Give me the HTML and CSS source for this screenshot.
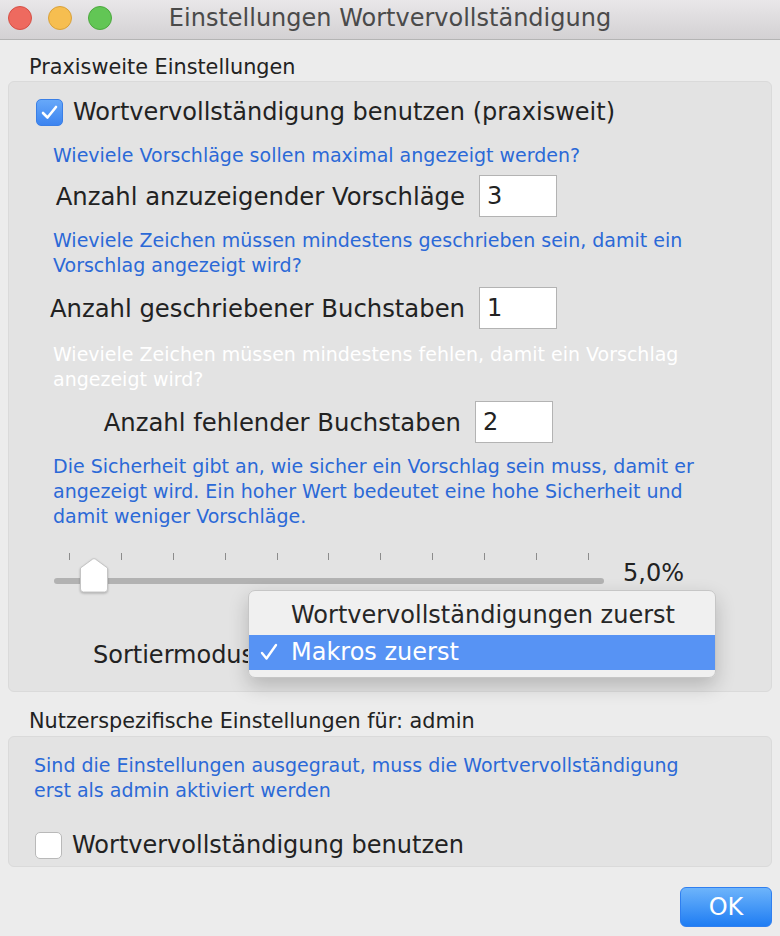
FILE: index.html
```html
<!DOCTYPE html>
<html lang="de">

<head>
    <meta charset="UTF-8">
    <meta name="viewport" content="width=device-width, initial-scale=1.0">
    <title>Einstellungen Wortvervollständigung</title>
    <link rel="stylesheet" href="styles.css">
</head>

<body>
    <div class="window">
        <div class="titlebar">
            <div class="lights">
                <span class="light red"></span>
                <span class="light yellow"></span>
                <span class="light green"></span>
            </div>
            <div class="title">Einstellungen Wortvervollständigung</div>
            <div></div>
        </div>

        <div class="content">
            <div class="section-label">Praxisweite Einstellungen</div>
            <div class="group group-main">
                <div class="check-row">
                    <span class="checkbox checked">
                        <svg width="17" height="15" viewBox="0 0 17 15"><path d="M2 8 L6.5 12.5 L15 2" fill="none" stroke="#fff" stroke-width="2.6" stroke-linecap="round" stroke-linejoin="round"/></svg>
                    </span>
                    <span>Wortvervollständigung benutzen (praxisweit)</span>
                </div>

                <p class="hint hint-first">Wieviele Vorschläge sollen maximal angezeigt werden?</p>
                <div class="field-row">
                    <span class="field-label">Anzahl anzuzeigender Vorschläge</span>
                    <span class="field-input">3</span>
                </div>

                <p class="hint">Wieviele Zeichen müssen mindestens geschrieben sein, damit ein<br>Vorschlag angezeigt wird?</p>
                <div class="field-row">
                    <span class="field-label">Anzahl geschriebener Buchstaben</span>
                    <span class="field-input">1</span>
                </div>

                <p class="hint hint-disabled">Wieviele Zeichen müssen mindestens fehlen, damit ein Vorschlag<br>angezeigt wird?</p>
                <div class="field-row field-row-short">
                    <span class="field-label">Anzahl fehlender Buchstaben</span>
                    <span class="field-input">2</span>
                </div>

                <p class="hint">Die Sicherheit gibt an, wie sicher ein Vorschlag sein muss, damit er<br>angezeigt wird. Ein hoher Wert bedeutet eine hohe Sicherheit und<br>damit weniger Vorschläge.</p>

                <div class="slider-row">
                    <div class="slider">
                        <div class="ticks">
                            <span></span><span></span><span></span><span></span><span></span><span></span>
                            <span></span><span></span><span></span><span></span><span></span>
                        </div>
                        <div class="track"></div>
                        <svg class="knob" width="32" height="37" viewBox="0 0 32 37">
                            <path d="M14.5 2.2 Q16 1 17.5 2.2 L29.5 11 L29.5 32 Q29.5 35 26.5 35 L5.5 35 Q2.5 35 2.5 32 L2.5 11 Z" fill="#fff" stroke="#c4c4c4" stroke-width="1"/>
                        </svg>
                    </div>
                    <span class="slider-value">5,0%</span>
                </div>

                <div class="sort-row">Sortiermodus</div>

                <div class="popup-menu">
                    <div class="menu-item">Wortvervollständigungen zuerst</div>
                    <div class="menu-item selected">
                        <svg class="tick" width="18" height="18" viewBox="0 0 18 18"><path d="M2 10 L6.5 15.5 L16 2" fill="none" stroke="#fff" stroke-width="2.4" stroke-linecap="round" stroke-linejoin="round"/></svg>
                        Makros zuerst
                    </div>
                </div>
            </div>

            <div class="section-label section-label-user">Nutzerspezifische Einstellungen für: admin</div>
            <div class="group group-user">
                <p class="hint hint-user">Sind die Einstellungen ausgegraut, muss die Wortvervollständigung<br>erst als admin aktiviert werden</p>
                <div class="check-row check-row-user">
                    <span class="checkbox"></span>
                    <span>Wortvervollständigung benutzen</span>
                </div>
            </div>

            <div class="buttons">
                <button class="ok-button">OK</button>
            </div>
        </div>
    </div>
</body>

</html>
```

FILE: styles.css
```css
body {
    margin: 0;
    font-family: "DejaVu Sans", "Liberation Sans", sans-serif;
    background: #ececec;
    color: #222;
}

.window {
    width: 780px;
    height: 936px;
    background: #ececec;
    overflow: hidden;
}

.titlebar {
    height: 39px;
    display: grid;
    grid-template-columns: 1fr auto 1fr;
    align-items: center;
    background: linear-gradient(#e9e7e9, #d3d1d3);
    border-bottom: 1px solid #b4b4b4;
}

.lights {
    display: flex;
    gap: 16px;
    padding-left: 8px;
    padding-bottom: 3px;
}

.light {
    width: 22px;
    height: 22px;
    border-radius: 50%;
    border: 1px solid;
}

.red {
    background: #ee6a5f;
    border-color: #d65046;
}

.yellow {
    background: #f6be50;
    border-color: #d9a13a;
}

.green {
    background: #62c655;
    border-color: #4ca83e;
}

.title {
    font-size: 24px;
    color: #4a4a4a;
    padding-bottom: 3px;
}

.content {
    padding: 0 8px;
}

.section-label {
    font-size: 20.8px;
    line-height: 22px;
    padding-left: 21px;
    margin-top: 16px;
    margin-bottom: 3px;
}

.section-label-user {
    margin-top: 18px;
    margin-bottom: 4px;
}

.group {
    position: relative;
    box-sizing: border-box;
    background: #e3e3e3;
    border: 1px solid #dadada;
    border-radius: 6px;
    padding: 0 27px;
}

.group-main {
    height: 611px;
    padding-top: 16px;
}

.check-row {
    display: flex;
    align-items: center;
    gap: 10px;
    font-size: 24px;
    height: 28px;
}

.checkbox {
    width: 25px;
    height: 25px;
    border-radius: 5px;
    border: 1px solid #b9b9b9;
    background: #fff;
    display: flex;
    align-items: center;
    justify-content: center;
}

.checkbox.checked {
    border-color: #3a7fe6;
    background: linear-gradient(#67a8f9, #3c84f0);
}

.hint {
    margin: 11px 0 0 17px;
    font-size: 19px;
    line-height: 25px;
    color: #2b69d7;
}

.hint-first {
    margin-top: 17px;
}

.hint-disabled {
    color: #fff;
    margin-top: 13px;
}

.field-row {
    display: flex;
    align-items: center;
    margin-top: 9px;
    font-size: 24.3px;
}

.hint-first + .field-row {
    margin-top: 7px;
}

.field-label {
    width: 429px;
    text-align: right;
    margin-right: 14px;
}

.field-row-short .field-label {
    width: 425px;
}

.field-input {
    width: 69px;
    height: 40px;
    line-height: 40px;
    padding-left: 7px;
    font-size: 24px;
    background: #fff;
    border: 1px solid #b3b3b3;
}

.slider-row {
    display: flex;
    align-items: flex-start;
    margin: 22px 0 0 18px;
}

.slider {
    position: relative;
    width: 550px;
    height: 42px;
}

.ticks {
    display: flex;
    justify-content: space-between;
    padding: 2px 15px 0;
}

.ticks span {
    width: 1px;
    height: 7px;
    background: #8c8c8c;
}

.track {
    margin-top: 18px;
    height: 6px;
    border-radius: 3px;
    background: #b2b2b2;
}

.knob {
    position: absolute;
    left: 24px;
    top: 6px;
    filter: drop-shadow(0 1px 1px rgba(0, 0, 0, 0.25));
}

.slider-value {
    margin-left: 19px;
    font-size: 24px;
    line-height: 30px;
    margin-top: 7px;
}

.sort-row {
    margin: 47px 0 0 57px;
    font-size: 24px;
    line-height: 30px;
}

.popup-menu {
    position: absolute;
    left: 239px;
    top: 508px;
    width: 468px;
    height: 88px;
    box-sizing: border-box;
    padding-top: 4px;
    background: rgba(240, 240, 240, 0.98);
    border: 1px solid #c6c6c6;
    border-radius: 7px;
    box-shadow: 0 8px 20px rgba(0, 0, 0, 0.2);
    font-size: 24px;
    overflow: hidden;
}

.menu-item {
    height: 40px;
    line-height: 40px;
    padding-left: 42px;
    color: #262626;
}

.menu-item.selected {
    height: 35px;
    line-height: 35px;
    background: #5793f4;
    color: #fff;
    position: relative;
}

.tick {
    position: absolute;
    left: 11px;
    top: 8px;
}

.group-user {
    height: 131px;
    padding-top: 16px;
}

.hint-user {
    margin: 0 0 0 -2px;
}

.check-row-user {
    margin-top: 28px;
    margin-left: -1px;
}

.buttons {
    display: flex;
    justify-content: flex-end;
    margin-top: 20px;
}

.ok-button {
    width: 92px;
    height: 40px;
    border: 1px solid #2f7ff0;
    border-radius: 6px;
    background: linear-gradient(#6db4fb, #1f7df3);
    color: #fff;
    font-family: inherit;
    font-size: 24px;
}
```
